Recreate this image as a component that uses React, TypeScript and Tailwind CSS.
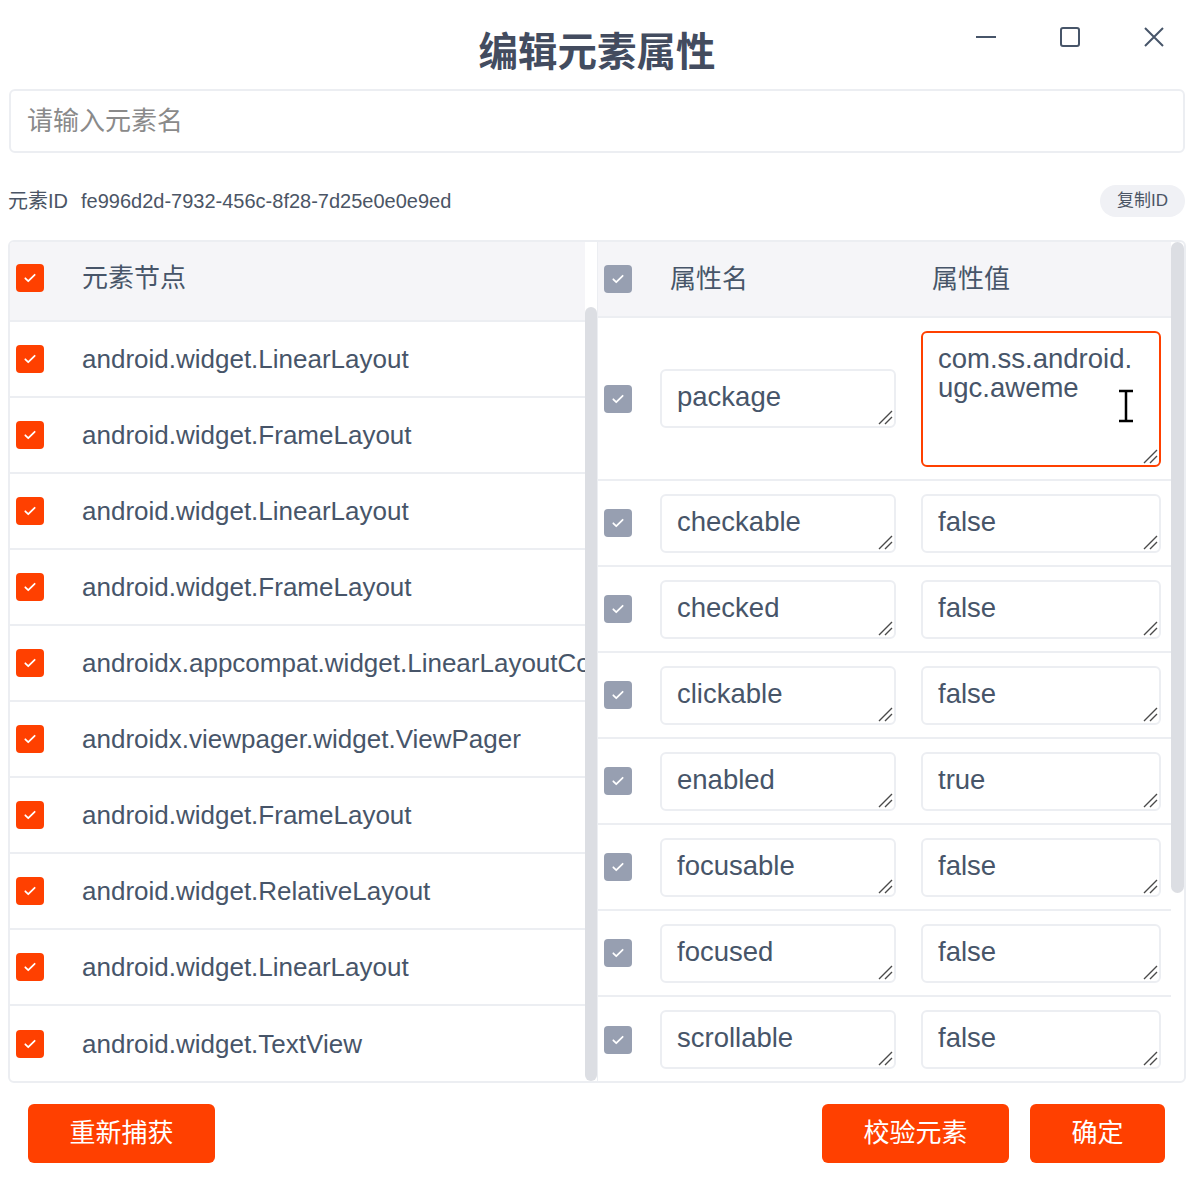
import React from 'react';

const nodes = [
    'android.widget.LinearLayout',
    'android.widget.FrameLayout',
    'android.widget.LinearLayout',
    'android.widget.FrameLayout',
    'androidx.appcompat.widget.LinearLayoutCompat',
    'androidx.viewpager.widget.ViewPager',
    'android.widget.FrameLayout',
    'android.widget.RelativeLayout',
    'android.widget.LinearLayout',
    'android.widget.TextView',
];

const attrs = [
    { name: 'checkable', value: 'false' },
    { name: 'checked', value: 'false' },
    { name: 'clickable', value: 'false' },
    { name: 'enabled', value: 'true' },
    { name: 'focusable', value: 'false' },
    { name: 'focused', value: 'false' },
    { name: 'scrollable', value: 'false' },
];

function Check({ orange }: { orange?: boolean }) {
    return (
        <span
            className={
                orange
                    ? 'w-[28px] h-[28px] rounded-[4px] flex items-center justify-center shrink-0 bg-[#ff4000]'
                    : 'w-[28px] h-[28px] rounded-[4px] flex items-center justify-center shrink-0 bg-[#979fb1]'
            }
        >
            <svg width="14" height="14" viewBox="0 0 24 24" fill="none">
                <path d="M4 12.5l5 5L20 6.5" stroke="white" strokeWidth="3" strokeLinecap="round" strokeLinejoin="round" />
            </svg>
        </span>
    );
}

// shared textarea look; grip is drawn on top so it matches the Windows style
const areaCls =
    'block w-full border-2 rounded-[6px] pl-[15px] pr-[15px] pt-[11px] text-[27.5px] leading-[29px] text-[#475569] bg-white outline-none overflow-hidden resize-none font-["Liberation_Sans","Noto_Sans_CJK_SC",sans-serif]';

function Field({ value, tall, active }: { value: string; tall?: boolean; active?: boolean }) {
    return (
        <div className="relative">
            <textarea
                readOnly
                value={value}
                className={
                    areaCls +
                    (tall ? ' h-[136px]' : ' h-[59px]') +
                    (active ? ' border-[#ff4000]' : ' border-[#eceef2]')
                }
            />
            <svg className="absolute right-[3px] bottom-[3px] pointer-events-none" width="16" height="16" viewBox="0 0 16 16" fill="none">
                <path d="M15 2L2 15M15 8L8 15" stroke="#4a4a4a" strokeWidth="1.4" />
            </svg>
        </div>
    );
}

export default function App() {
    return (
        <div className="w-[1194px] h-[1194px] bg-white overflow-hidden flex flex-col text-[#475569] font-['Liberation_Sans','Noto_Sans_CJK_SC',sans-serif]">
            {/* title bar */}
            <div className="grid grid-cols-[1fr_auto_1fr] h-[89px]">
                <div />
                <h1 className="pt-[26px] text-[39.5px] leading-[46px] font-bold text-[#434c5f] font-['Noto_Sans_CJK_SC',sans-serif]">
                    编辑元素属性
                </h1>
                <div className="flex justify-end items-start -mr-[2px]">
                    <button className="w-[84px] h-[74px] flex items-center justify-center">
                        <svg width="22" height="22" viewBox="0 0 22 22" fill="none">
                            <path d="M1 11h20" stroke="#475569" strokeWidth="2" />
                        </svg>
                    </button>
                    <button className="w-[84px] h-[74px] flex items-center justify-center">
                        <svg width="22" height="22" viewBox="0 0 22 22" fill="none">
                            <rect x="2" y="2" width="18" height="18" rx="2" stroke="#475569" strokeWidth="2" />
                        </svg>
                    </button>
                    <button className="w-[84px] h-[74px] flex items-center justify-center">
                        <svg width="22" height="22" viewBox="0 0 22 22" fill="none">
                            <path d="M2 2l18 18M20 2L2 20" stroke="#475569" strokeWidth="2" />
                        </svg>
                    </button>
                </div>
            </div>

            {/* search */}
            <div className="mx-[9px] h-[64px] border-2 border-[#eceef2] rounded-[6px] flex items-center pl-[16px]">
                <span className="text-[26px] text-[#8a8a8a]">请输入元素名</span>
            </div>

            {/* element id */}
            <div className="mt-[32px] pl-[8px] pr-[9px] flex items-center justify-between h-[32px]">
                <div className="flex items-center gap-[13px] text-[20px] text-[#4b5565]">
                    <span>元素ID</span>
                    <span>fe996d2d-7932-456c-8f28-7d25e0e0e9ed</span>
                </div>
                <button className="h-[32px] w-[85px] rounded-full bg-[#f0f1f5] text-[17px] text-[#4b5565]">复制ID</button>
            </div>

            {/* tables */}
            <div className="mt-[23px] mx-[8px] h-[843px] border-2 border-[#eceef2] rounded-[6px] flex overflow-hidden">
                {/* element nodes */}
                <div className="w-[575px] flex flex-col overflow-hidden">
                    <div className="h-[80px] shrink-0 bg-[#f5f5f8] border-b-2 border-[#eceef2] flex items-center pl-[6px] pb-[6px]">
                        <Check orange />
                        <span className="ml-[38px] text-[26px]">元素节点</span>
                    </div>
                    {nodes.map((n, i) => (
                        <div
                            key={i}
                            className={
                                i === nodes.length - 1
                                    ? 'h-[76px] shrink-0 flex items-center pl-[6px]'
                                    : 'h-[76px] shrink-0 flex items-center pl-[6px] border-b-2 border-[#eceef2]'
                            }
                        >
                            <Check orange />
                            <span className="ml-[38px] text-[26px] whitespace-nowrap">{n}</span>
                        </div>
                    ))}
                </div>
                <div className="w-[12px] shrink-0 flex flex-col">
                    <div className="h-[65px]" />
                    <div className="flex-1 rounded-full bg-[#dcdee3]" />
                </div>

                {/* attributes */}
                <div className="flex-1 border-l border-[#eceef2] flex">
                    <div className="flex-1 flex flex-col overflow-hidden">
                        <div className="h-[76px] shrink-0 bg-[#f5f5f8] border-b-2 border-[#eceef2] grid grid-cols-[28px_236px_237px] gap-x-[28px] items-center pl-[6px]">
                            <Check />
                            <span className="pl-[10px] text-[26px]">属性名</span>
                            <span className="pl-[8px] text-[26px]">属性值</span>
                        </div>
                        <div className="h-[163px] shrink-0 border-b-2 border-[#eceef2] grid grid-cols-[28px_236px_237px] gap-x-[28px] items-center pl-[6px]">
                            <Check />
                            <Field value="package" />
                            <div className="relative -ml-[3px]">
                                <Field value="com.ss.android.ugc.aweme" tall active />
                                <svg className="absolute left-[195px] top-[58px]" width="20" height="34" viewBox="0 0 20 34" fill="none">
                                    <path d="M3 2h14M3 32h14M10 2v30" stroke="#000" strokeWidth="2.5" />
                                </svg>
                            </div>
                        </div>
                        {attrs.map((a, i) => (
                            <div
                                key={a.name}
                                className={
                                    i === attrs.length - 1
                                        ? 'h-[85px] shrink-0 grid grid-cols-[28px_236px_237px] gap-x-[28px] items-center pl-[6px]'
                                        : 'h-[86px] shrink-0 border-b-2 border-[#eceef2] grid grid-cols-[28px_236px_237px] gap-x-[28px] items-center pl-[6px]'
                                }
                            >
                                <Check />
                                <Field value={a.name} />
                                <div className="-ml-[3px]">
                                    <Field value={a.value} />
                                </div>
                            </div>
                        ))}
                    </div>
                    <div className="w-[13px] shrink-0 flex flex-col">
                        <div className="h-[651px] rounded-full bg-[#dcdee3]" />
                    </div>
                </div>
            </div>

            {/* actions */}
            <div className="mt-[21px] pl-[28px] pr-[29px] flex items-center">
                <button className="w-[187px] h-[59px] rounded-[6px] bg-[#ff4000] text-white text-[26px]">重新捕获</button>
                <div className="flex-1" />
                <button className="w-[187px] h-[59px] rounded-[6px] bg-[#ff4000] text-white text-[26px]">校验元素</button>
                <button className="ml-[21px] w-[135px] h-[59px] rounded-[6px] bg-[#ff4000] text-white text-[26px]">确定</button>
            </div>
        </div>
    );
}
